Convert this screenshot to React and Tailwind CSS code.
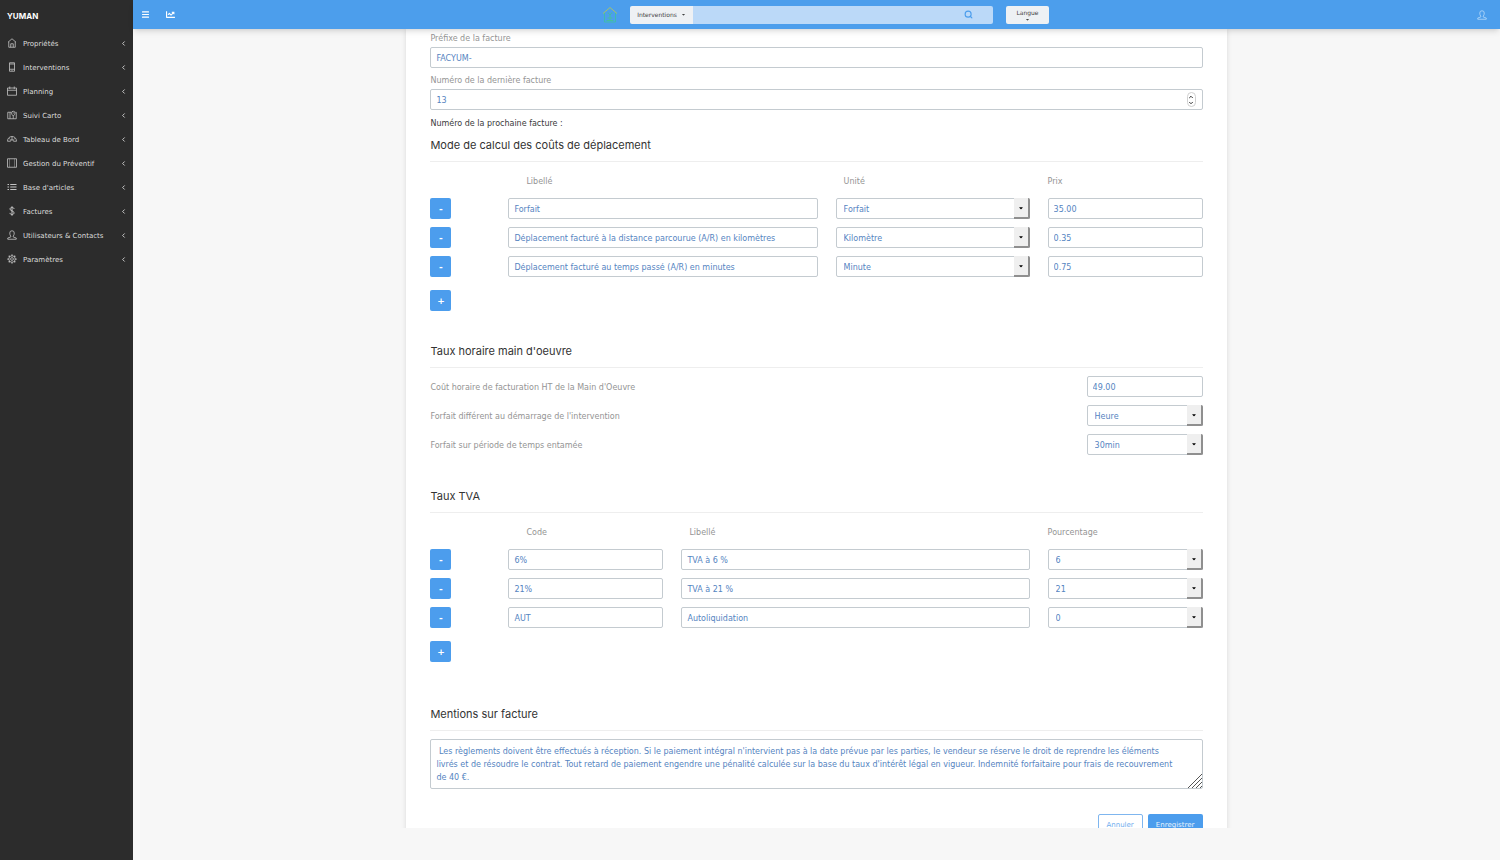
import React from 'react';
import { ChevronLeft, ChevronDown, ChevronUp, Menu, Search } from 'lucide-react';
import { FaCaretDown, FaChartLine } from 'react-icons/fa';

const Icon = ({ children, className = 'size-[10px]' }) => (
    <svg viewBox="0 0 20 20" fill="none" stroke="currentColor" strokeWidth="1.6" className={className} aria-hidden="true">
        {children}
    </svg>
);

const UserIcon = ({ className }) => (
    <Icon className={className}>
        <path d="M7.5 12.5C6 10.500 5.500 8 5.500 6a4.500 4.500 0 0 1 9 0c0 2-.5 4.500-2 6.500v1.500l6 2v2.500h-17V16l6-2z" />
    </Icon>
);

const menu = [
    { label: 'Propriétés', icon: <Icon><path d="M2 8.500 10 1.500l8 7M3.500 7.500v11h13v-11M7.500 18.500v-7h5v7" /></Icon> },
    { label: 'Interventions', icon: <Icon><path d="M5 1.500h10v17H5zM5 4h10M5 14.500h10M9 16.500h2" /></Icon> },
    { label: 'Planning', icon: <Icon><path d="M1 4h18v14.500H1zM1 8.500h18M5.500 1v5M14.500 1v5" /></Icon> },
    { label: 'Suivi Carto', icon: <Icon><path d="M8 4.500H1.500v13h17v-13H17M6 4.500v13M12.500 17.500v-6M12.500 12C10 9.500 9 8 9 6a3.500 3.500 0 0 1 7 0c0 2-1 3.500-3.500 6zM12.500 5v2" /></Icon> },
    { label: 'Tableau de Bord', icon: <Icon><path d="M1 14.500c0-6 4-9.500 9-9.500s9 3.500 9 9.500h-6a3 3 0 0 0-6 0zM10 5v7M4 8.500l3 3M16 8.500l-3 3" /></Icon> },
    { label: 'Gestion du Préventif', icon: <Icon><path d="M1 1.500h18v17H1z" /><path d="M5 1.500v17M15 1.500v17" strokeWidth="0.8" /></Icon> },
    { label: "Base d'articles", icon: <Icon><path d="M1 5h3M6.500 5H19M1 10h3M6.500 10H19M1 15h3M6.500 15H19" strokeWidth="2" /></Icon> },
    { label: 'Factures', icon: <Icon><path d="M14 6c0-2-1.500-3-4-3S6 4.200 6 6.200c0 4.300 8 2.800 8 7.300 0 2.200-1.500 3.500-4 3.500s-4-1.200-4-3.200M10 .5v19" strokeWidth="2" /></Icon> },
    { label: 'Utilisateurs & Contacts', icon: <UserIcon /> },
    {
        label: 'Paramètres',
        icon: (
            <Icon>
                <circle cx="10" cy="10" r="6.500" />
                <circle cx="10" cy="10" r="2.800" />
                <path d="M10 .8v2.700M10 16.500v2.700M.8 10h2.700M16.500 10h2.700M3.500 3.500l1.900 1.900M14.600 14.600l1.900 1.900M3.500 16.500l1.900-1.900M14.600 5.400l1.900-1.900" strokeWidth="2.500" />
            </Icon>
        ),
    },
];

const travelCosts = [
    { name: 'Forfait', unit: 'Forfait', price: '35.00' },
    { name: 'Déplacement facturé à la distance parcourue (A/R) en kilomètres', unit: 'Kilomètre', price: '0.35' },
    { name: 'Déplacement facturé au temps passé (A/R) en minutes', unit: 'Minute', price: '0.75' },
];

const vatRates = [
    { code: '6%', name: 'TVA à 6 %', rate: '6' },
    { code: '21%', name: 'TVA à 21 %', rate: '21' },
    { code: 'AUT', name: 'Autoliquidation', rate: '0' },
];

const legalNotice =
    " Les règlements doivent être effectués à réception. Si le paiement intégral n'intervient pas à la date prévue par les parties, le vendeur se réserve le droit de reprendre les éléments livrés et de résoudre le contrat. Tout retard de paiement engendre une pénalité calculée sur la base du taux d'intérêt légal en vigueur. Indemnité forfaitaire pour frais de recouvrement de 40 €.";

const TextField = (props) => (
    <input
        type="text"
        {...props}
        className="block h-[21px] w-full rounded-[2px] border border-[#c4cbd0] bg-white px-[5px] pt-px text-[#5584bf] [appearance:textfield]"
    />
);

const SelectField = ({ options, ...props }) => (
    <div className="relative h-[21px] w-full">
        <select
            {...props}
            className="block h-full w-full appearance-none rounded-[2px] border border-[#c4cbd0] bg-white pt-[2px] pr-5 pl-[7px] text-[#5584bf]"
        >
            {options.map((o) => <option key={o}>{o}</option>)}
        </select>
        <span className="pointer-events-none absolute inset-y-0 right-0 flex w-4 items-center justify-center rounded-r-[2px] border-r-2 border-b-2 border-[#8f8f8f] bg-[#efefef] text-black">
            <FaCaretDown className="size-[6px]" />
        </span>
    </div>
);

const SquareButton = ({ children, label }) => (
    <button type="button" aria-label={label} className="flex size-[21px] items-center justify-center rounded-[2px] bg-[#4c9ded] text-[9px] font-bold text-white">
        {children}
    </button>
);

const SectionTitle = ({ children }) => (
    <h2 className="border-b border-[#eeeeee] pb-2 font-['Inter',sans-serif] text-[11px] leading-4 text-[#333]">{children}</h2>
);

const Th = ({ children, className = '' }) => (
    <th scope="col" className={`pb-[9px] text-left font-normal text-[#949494] ${className}`}>{children}</th>
);

function Sidebar() {
    return (
        <aside className="w-[133px] shrink-0 bg-[#2c2c2c] text-[7px] text-[#dcdcdc]">
            <div className="flex h-[31px] items-center px-[7px] font-['Inter',sans-serif] text-[8px] font-bold text-white">YUMAN</div>
            <nav>
                {menu.map((item) => (
                    <a key={item.label} href="#" className="flex h-6 items-center gap-[6px] pr-[6px] pl-[7px]">
                        <span className="text-[#c4c4c4]">{item.icon}</span>
                        <span className="flex-1 pt-[2px] whitespace-nowrap">{item.label}</span>
                        <ChevronLeft className="size-[7px]" strokeWidth={3} />
                    </a>
                ))}
            </nav>
        </aside>
    );
}

function Header() {
    return (
        <header className="z-10 grid h-[29px] shrink-0 grid-cols-[1fr_auto_1fr] items-center bg-[#4c9eec] px-2 text-white shadow-md shadow-black/10">
            <div className="flex items-center gap-4">
                <button type="button" aria-label="Menu"><Menu className="size-[9px]" strokeWidth={3} /></button>
                <button type="button" aria-label="Statistiques"><FaChartLine className="size-[9px]" /></button>
            </div>
            <div className="flex items-center pl-[18px]">
                <a href="#" aria-label="Accueil">
                    <svg viewBox="0 0 32 36" className="h-[18px] w-4" fill="none" strokeWidth="2">
                        <path d="M2 15 16 3l14 12" stroke="#a3c26b" />
                        <path d="M5 14v18h22V14" stroke="#3fbcae" />
                        <path d="M11 14c3 0 4 2 5 4 1-2 2-4 5-4M16 17v12M11 24h10M9 29h14" stroke="#45bfa0" />
                    </svg>
                </a>
                <form className="ml-3 flex h-[18px] w-[363px] overflow-hidden rounded-[2px]">
                    <button type="button" className="flex w-[63px] shrink-0 items-center justify-center gap-1 bg-[#eef1f4] text-[6px] text-[#444]">
                        Interventions <FaCaretDown className="size-[5px]" />
                    </button>
                    <div className="flex flex-1 items-center bg-[#bbd9f8] pr-5">
                        <input type="search" aria-label="Recherche" className="min-w-0 flex-1 self-stretch px-2 text-[#444] outline-none" />
                        <button type="submit" aria-label="Rechercher"><Search className="size-[9px] text-[#4c9eec]" strokeWidth={3} /></button>
                    </div>
                </form>
                <button type="button" className="ml-[13px] flex h-[18px] w-[43px] flex-col items-center rounded-[2px] bg-[#eef1f4] pt-[3px] text-[6px] leading-[8px] text-[#444]">
                    Langue
                    <FaCaretDown className="size-[5px]" />
                </button>
            </div>
            <button type="button" aria-label="Mon compte" className="mr-[5px] justify-self-end text-[#b9dafa]">
                <UserIcon className="size-[10px]" />
            </button>
        </header>
    );
}

function InvoiceSettings() {
    return (
        <form className="mx-auto w-3/5 bg-white px-6 pt-[3px] pb-6 shadow-[0_0_5px_rgba(0,0,0,0.12)]">
            <label htmlFor="prefix" className="mb-px block text-[#949494]">Préfixe de la facture</label>
            <TextField id="prefix" defaultValue="FACYUM-" />
            <label htmlFor="last" className="mt-[6px] mb-px block text-[#949494]">Numéro de la dernière facture</label>
            <div className="relative">
                <TextField id="last" type="number" defaultValue="13" />
                <span className="pointer-events-none absolute inset-y-[3px] right-[7px] flex w-[9px] flex-col items-center justify-center rounded-full border border-[#d0d0d0] text-[#333]">
                    <ChevronUp className="size-[6px]" strokeWidth={4} />
                    <ChevronDown className="size-[6px]" strokeWidth={4} />
                </span>
            </div>
            <p className="mt-[7px] mb-[6px] text-[#3a3a3a]">Numéro de la prochaine facture :</p>

            <SectionTitle>Mode de calcul des coûts de déplacement</SectionTitle>
            <table className="mt-[13px] w-full table-fixed">
                <colgroup>
                    <col className="w-[78px]" />
                    <col />
                    <col className="w-[212px]" />
                    <col className="w-[155px]" />
                </colgroup>
                <thead>
                    <tr>
                        <td />
                        <Th className="pl-[18px]">Libellé</Th>
                        <Th className="pl-2">Unité</Th>
                        <Th>Prix</Th>
                    </tr>
                </thead>
                <tbody>
                    {travelCosts.map((row) => (
                        <tr key={row.name}>
                            <td className="p-0 pb-2"><SquareButton label="Supprimer">-</SquareButton></td>
                            <td className="p-0 pr-[18px] pb-2"><TextField aria-label="Libellé" defaultValue={row.name} /></td>
                            <td className="p-0 pr-[18px] pb-2">
                                <SelectField aria-label="Unité" defaultValue={row.unit} options={['Forfait', 'Kilomètre', 'Minute']} />
                            </td>
                            <td className="p-0 pb-2"><TextField aria-label="Prix" defaultValue={row.price} /></td>
                        </tr>
                    ))}
                </tbody>
            </table>
            <div className="mt-[5px] mb-8"><SquareButton label="Ajouter">+</SquareButton></div>

            <SectionTitle>Taux horaire main d'oeuvre</SectionTitle>
            <div className="mt-2 mb-[33px] grid grid-cols-[1fr_116px] items-center gap-y-2">
                <label htmlFor="hourly" className="pt-[2px] text-[#949494]">Coût horaire de facturation HT de la Main d'Oeuvre</label>
                <TextField id="hourly" defaultValue="49.00" />
                <label htmlFor="start" className="pt-[2px] text-[#949494]">Forfait différent au démarrage de l'intervention</label>
                <SelectField id="start" defaultValue="Heure" options={['Heure', '30min']} />
                <label htmlFor="period" className="pt-[2px] text-[#949494]">Forfait sur période de temps entamée</label>
                <SelectField id="period" defaultValue="30min" options={['Heure', '30min']} />
            </div>

            <SectionTitle>Taux TVA</SectionTitle>
            <table className="mt-[13px] w-full table-fixed">
                <colgroup>
                    <col className="w-[78px]" />
                    <col className="w-[173px]" />
                    <col />
                    <col className="w-[155px]" />
                </colgroup>
                <thead>
                    <tr>
                        <td />
                        <Th className="pl-[18px]">Code</Th>
                        <Th className="pl-2">Libellé</Th>
                        <Th>Pourcentage</Th>
                    </tr>
                </thead>
                <tbody>
                    {vatRates.map((row) => (
                        <tr key={row.code}>
                            <td className="p-0 pb-2"><SquareButton label="Supprimer">-</SquareButton></td>
                            <td className="p-0 pr-[18px] pb-2"><TextField aria-label="Code" defaultValue={row.code} /></td>
                            <td className="p-0 pr-[18px] pb-2"><TextField aria-label="Libellé" defaultValue={row.name} /></td>
                            <td className="p-0 pb-2">
                                <SelectField aria-label="Pourcentage" defaultValue={row.rate} options={['6', '21', '0']} />
                            </td>
                        </tr>
                    ))}
                </tbody>
            </table>
            <div className="mt-[5px] mb-11"><SquareButton label="Ajouter">+</SquareButton></div>

            <SectionTitle>Mentions sur facture</SectionTitle>
            <div className="relative mt-2">
                <textarea
                    aria-label="Mentions sur facture"
                    defaultValue={legalNotice}
                    className="block h-[50px] w-full resize-none overflow-hidden rounded-[2px] border border-[#c4cbd0] bg-white py-[5px] pr-5 pl-[5px] leading-[13px] text-[#5584bf]"
                />
                <svg viewBox="0 0 14 14" className="pointer-events-none absolute right-px bottom-px size-[14px]" stroke="#555" fill="none" aria-hidden="true">
                    <path d="M0 14 14 0M4 14 14 4M8 14l6-6M12 14l2-2" />
                </svg>
            </div>
            <div className="mt-[25px] flex justify-end gap-[5px] text-[7px]">
                <button type="button" className="h-[22px] w-[45px] rounded-[2px] border border-[#7fb6ef] text-[#6fadee]">Annuler</button>
                <button type="submit" className="h-[22px] w-[55px] rounded-[2px] bg-[#4c9ded] text-[#e6f2fd]">Enregistrer</button>
            </div>
        </form>
    );
}

export default function App() {
    return (
        <div className="flex h-screen bg-[#f7f7f7] font-['DejaVu_Sans',sans-serif] text-[8px] leading-[14px]">
            <Sidebar />
            <div className="flex min-w-0 flex-1 flex-col">
                <Header />
                <main className="mb-8 min-h-0 flex-1 overflow-y-auto [scrollbar-width:none]">
                    <InvoiceSettings />
                </main>
            </div>
        </div>
    );
}
